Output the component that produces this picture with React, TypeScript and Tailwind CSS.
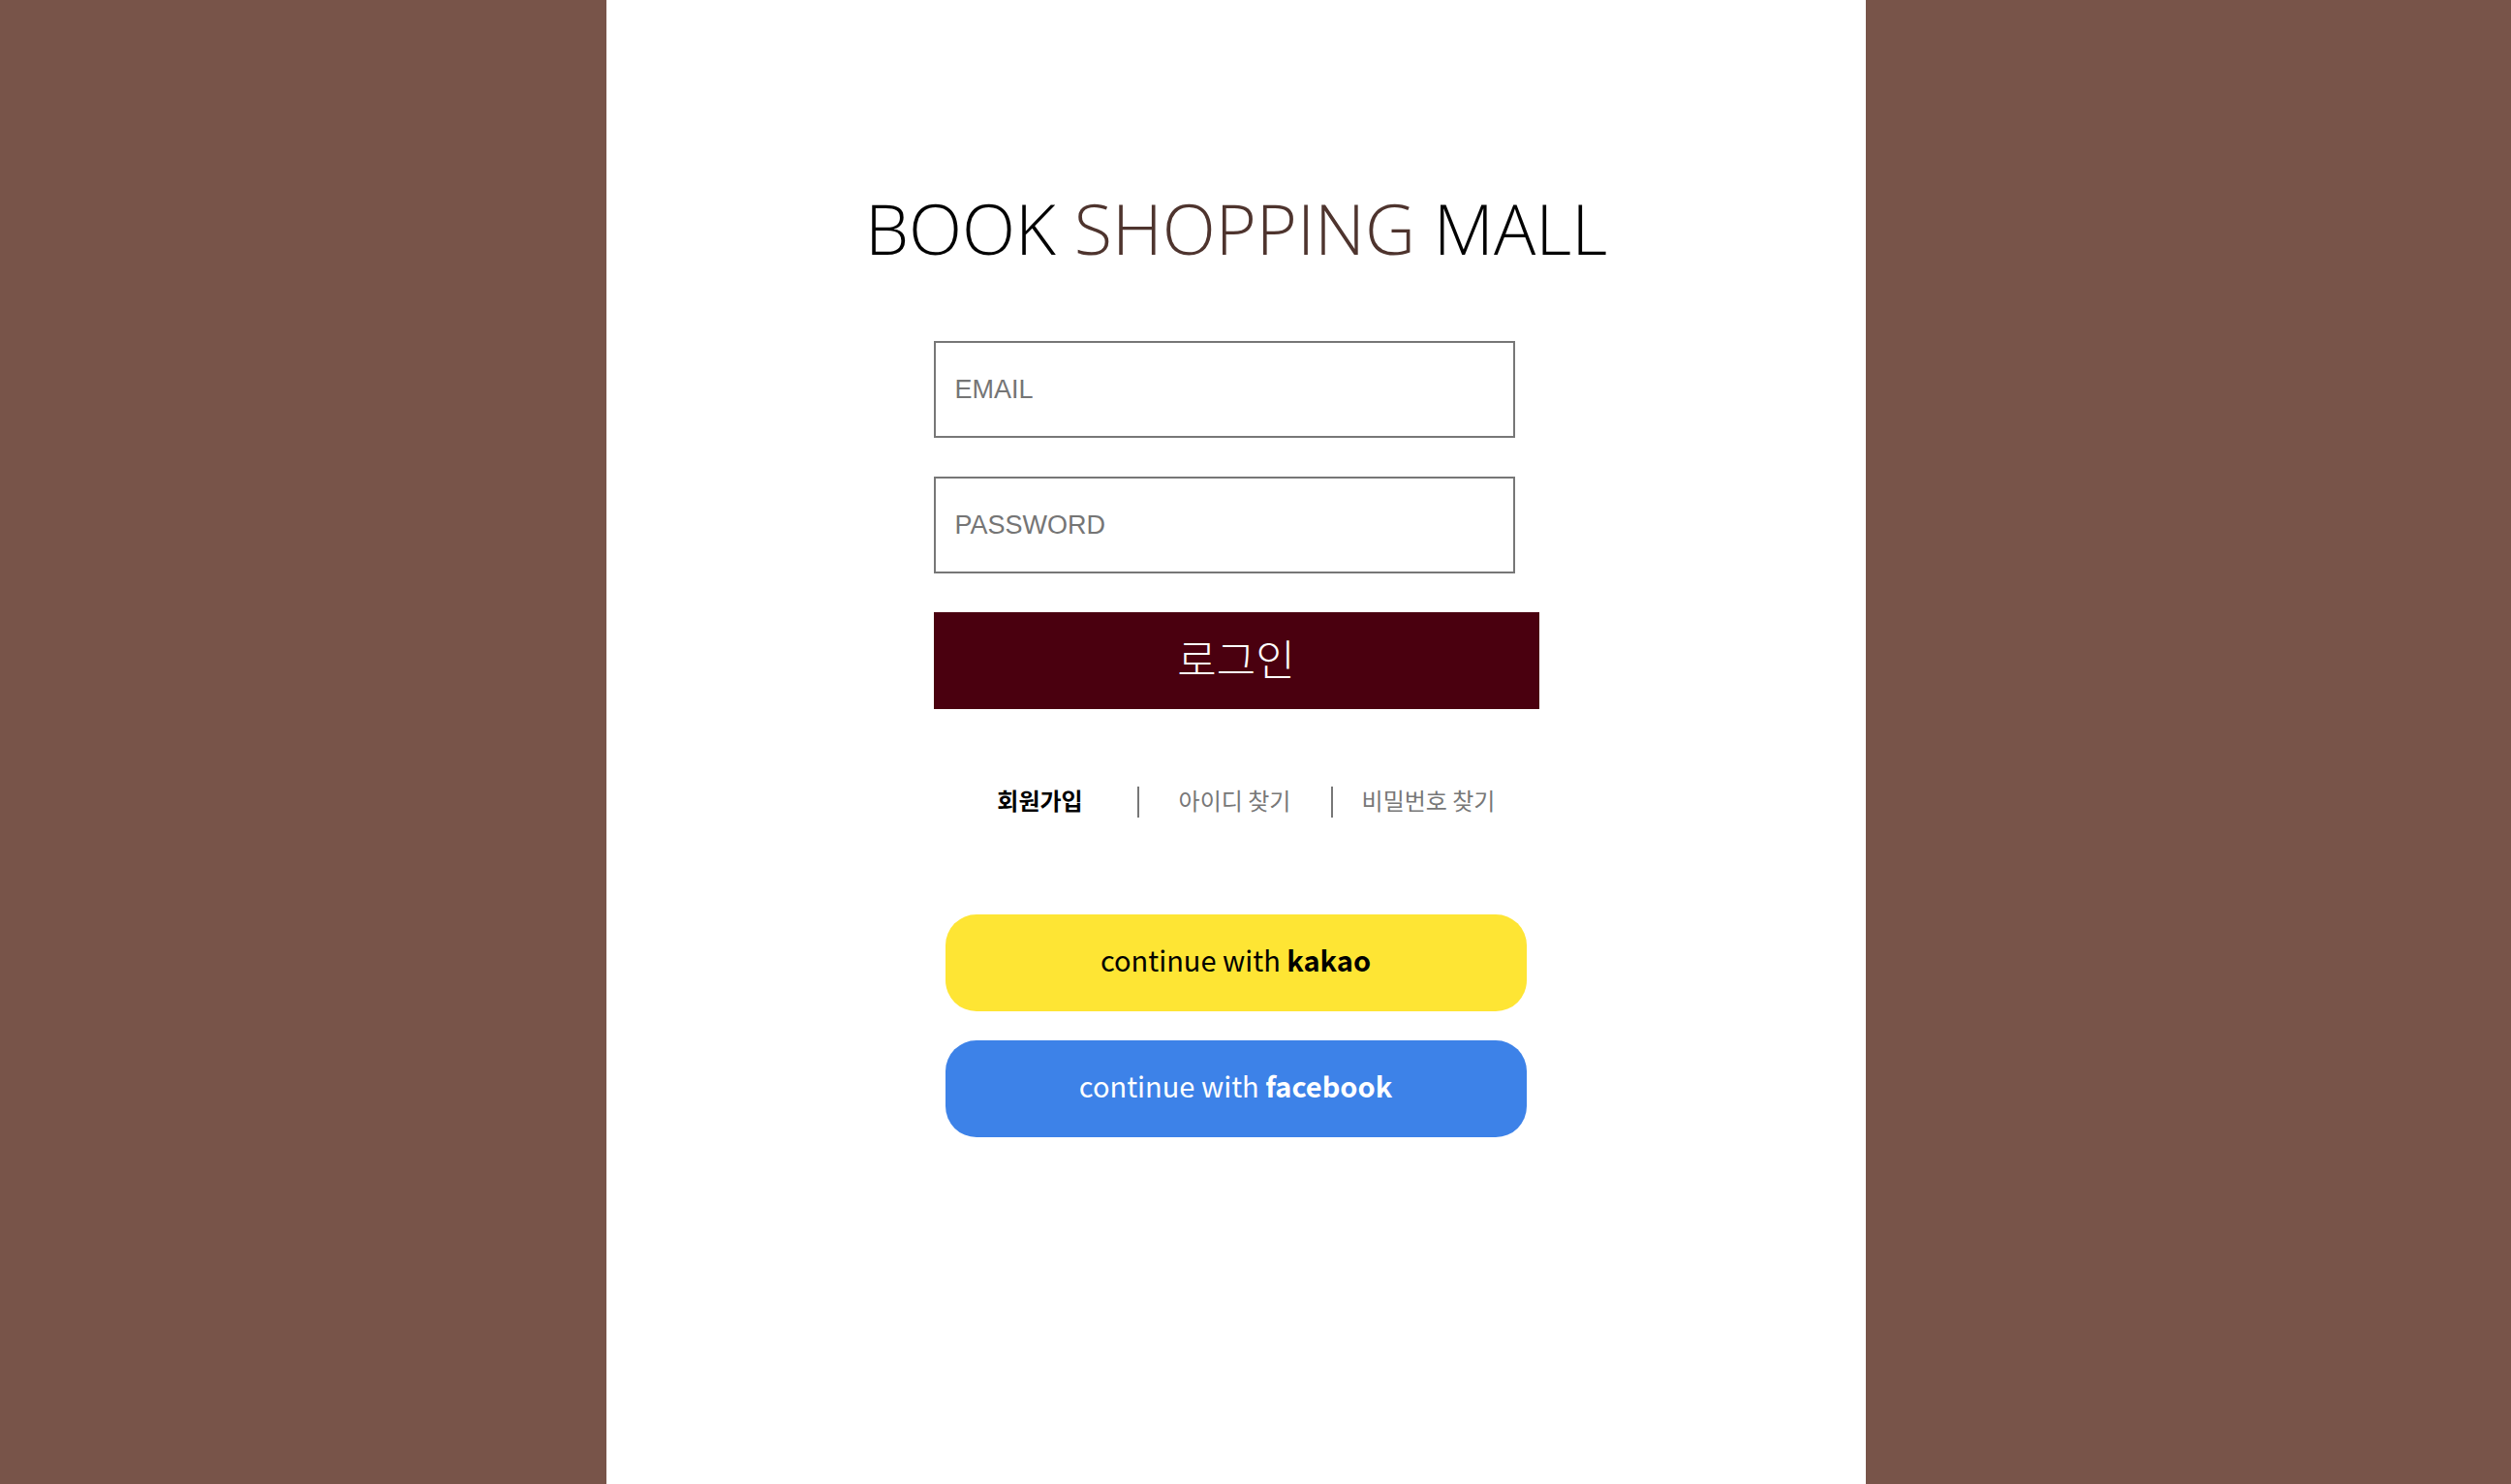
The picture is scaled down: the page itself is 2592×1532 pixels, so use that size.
import React from "react";

export default function App() {
  return (
    <div className="flex h-[1532px] w-full bg-[#785449] overflow-hidden">
      <div className="w-[626px] shrink-0" />
      <div className="flex h-full w-[1300px] shrink-0 flex-col items-center bg-white">
        <h1
          className="mt-[199px] text-[72px] font-light leading-none text-black"
          style={{ fontFamily: "'Open Sans', sans-serif" }}
        >
          BOOK <span className="text-[#4e342e]">SHOPPING</span> MALL
        </h1>

        <div className="mt-[81px] flex w-[625px] flex-col">
          <input
            type="text"
            placeholder="EMAIL"
            className="h-[100px] w-[600px] border-2 border-[#777777] bg-white px-5 text-[27px] text-black outline-none placeholder:text-[#757575]"
            style={{ fontFamily: "'Liberation Sans', Arial, sans-serif" }}
          />
          <input
            type="password"
            placeholder="PASSWORD"
            className="mt-[40px] h-[100px] w-[600px] border-2 border-[#777777] bg-white px-5 text-[27px] text-black outline-none placeholder:text-[#757575]"
            style={{ fontFamily: "'Liberation Sans', Arial, sans-serif" }}
          />
          <button
            className="mt-[40px] flex h-[100px] w-[625px] items-center justify-center bg-[#4a000f] pb-[6px] text-[44px] font-light text-white"
            style={{ fontFamily: "'Noto Sans CJK KR', sans-serif" }}
          >
            로그인
          </button>

          <div
            className="ml-[10px] mt-[80px] flex h-[32px] w-[600px] items-center text-[24px]"
            style={{ fontFamily: "'Noto Sans CJK KR', sans-serif" }}
          >
            <div className="flex h-full w-[200px] items-center justify-center pb-[5px] font-bold text-black">
              회원가입
            </div>
            <div className="flex h-full w-[200px] items-center justify-center border-l-2 border-[#777777] pb-[5px] text-[#777777]">
              아이디 찾기
            </div>
            <div className="flex h-full w-[200px] items-center justify-center border-l-2 border-[#777777] pb-[5px] text-[#777777]">
              비밀번호 찾기
            </div>
          </div>

          <button
            className="ml-[12px] mt-[100px] flex h-[100px] w-[600px] items-center justify-center rounded-[32px] bg-[#fee534] pb-[7px] text-[29px] text-black"
            style={{ fontFamily: "'Noto Sans CJK KR', sans-serif" }}
          >
            continue with&nbsp;<span className="font-bold">kakao</span>
          </button>
          <button
            className="ml-[12px] mt-[30px] flex h-[100px] w-[600px] items-center justify-center rounded-[32px] bg-[#3d82e8] pb-[7px] text-[29px] text-white"
            style={{ fontFamily: "'Noto Sans CJK KR', sans-serif" }}
          >
            continue with&nbsp;<span className="font-bold">facebook</span>
          </button>
        </div>
      </div>
      <div className="flex-1" />
    </div>
  );
}
